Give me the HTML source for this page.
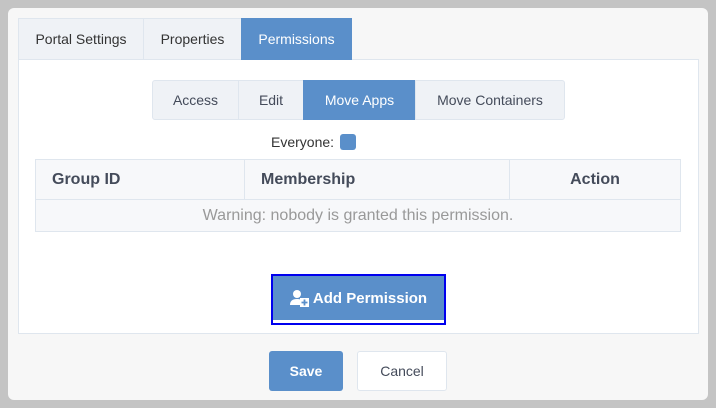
<!DOCTYPE html><html><head><style>
body{margin:0;width:716px;height:408px;background:#c4c4c4;font-family:"Liberation Sans",sans-serif;position:relative;overflow:hidden}
.a{position:absolute;box-sizing:border-box}
.pan{left:8px;top:8px;width:700px;height:392px;background:#f7f7f7;border-radius:6px}
.tab{top:18px;height:42px;background:#eff2f6;border:1px solid #dfe6ee;color:#333;font-size:14px;display:flex;align-items:center;justify-content:center}
.blue{background:#5a8fca!important;color:#fff!important;border-color:#5a8fca!important}
.st{top:80px;height:40px;background:#eff2f6;border:1px solid #dfe6ee;color:#444b5a;font-size:14px;display:flex;align-items:center;justify-content:center}
.th{top:159px;height:41px;border:1px solid #dfe6ee;font-weight:bold;font-size:16px;color:#444b5a;display:flex;align-items:center;padding-left:16px;background:#f7f8fa}
</style></head><body>
<div class="a pan"></div>
<div class="a" style="left:18px;top:59px;width:681px;height:275px;background:#fff;border:1px solid #dfe6ee"></div>
<div class="a tab" style="left:18px;width:126px">Portal Settings</div>
<div class="a tab" style="left:143px;width:99px">Properties</div>
<div class="a tab blue" style="left:241px;width:111px">Permissions</div>
<div class="a st" style="left:152px;width:87px;border-radius:3px 0 0 3px">Access</div>
<div class="a st" style="left:238px;width:66px">Edit</div>
<div class="a st blue" style="left:303px;width:113px">Move Apps</div>
<div class="a st" style="left:415px;width:150px;border-radius:0 3px 3px 0">Move Containers</div>
<div class="a" style="left:271px;top:134px;font-size:14px;color:#333">Everyone:</div>
<div class="a" style="left:340px;top:134px;width:16px;height:16px;background:#5a8fca;border-radius:3px"></div>
<div class="a th" style="left:35px;width:210px">Group ID</div>
<div class="a th" style="left:244px;width:266px">Membership</div>
<div class="a th" style="left:509px;width:172px;justify-content:center;padding-left:0">Action</div>
<div class="a" style="left:35px;top:199px;width:646px;height:33px;border:1px solid #dfe6ee;background:#f7f8fa;color:#999;font-size:16px;display:flex;align-items:center;justify-content:center">Warning: nobody is granted this permission.</div>
<div class="a" style="left:271px;top:274px;width:175px;height:51px;border:2px solid #0000ee;background:#fff"></div>
<div class="a" style="left:273px;top:276px;width:171px;height:44px;background:#5a8fca;color:#fff;font-weight:bold;font-size:15px;display:flex;align-items:center;justify-content:center">
<svg width="20" height="18" viewBox="0 0 20 18" style="margin-right:3px"><circle cx="7" cy="5" r="4" fill="#fff"/><path d="M0 16q0-6 7-6q4 0 6 2v4z" fill="#fff"/><rect x="10" y="9" width="9" height="9" fill="#fff"/><path d="M14.5 10.5v6M11.5 13.5h6" stroke="#5a8fca" stroke-width="1.8"/></svg>Add Permission</div>
<div class="a" style="left:269px;top:351px;width:74px;height:40px;background:#5a8fca;border-radius:3px;color:#fff;font-weight:bold;font-size:14px;display:flex;align-items:center;justify-content:center">Save</div>
<div class="a" style="left:357px;top:351px;width:90px;height:40px;background:#fff;border:1px solid #dfe6ee;border-radius:3px;color:#444b5a;font-size:14px;display:flex;align-items:center;justify-content:center">Cancel</div>
</body></html>
